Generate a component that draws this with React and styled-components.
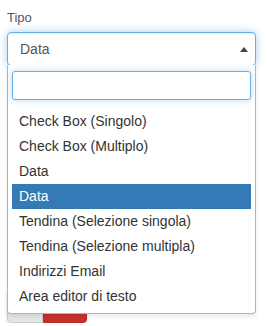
import React from "react";
import styled, { createGlobalStyle } from "styled-components";

const GlobalStyle = createGlobalStyle`
  body {
    margin: 0;
    background: #fff;
    font-family: "Liberation Sans", Arial, sans-serif;
  }
`;

const options = [
  "Check Box (Singolo)",
  "Check Box (Multiplo)",
  "Data",
  "Data",
  "Tendina (Selezione singola)",
  "Tendina (Selezione multipla)",
  "Indirizzi Email",
  "Area editor di testo",
];

const App = () => {
  return (
    <>
      <GlobalStyle />
      <Page>
        <Label>Tipo</Label>
        <Field>
          <Select>
            <Value>Data</Value>
            <Arrow />
          </Select>
          <Dropdown>
            <SearchWrap>
              <Search type="text" />
            </SearchWrap>
            <Results>
              {options.map((o, i) => (
                <Option key={i} $active={i === 3}>
                  {o}
                </Option>
              ))}
            </Results>
          </Dropdown>
        </Field>
        <Buttons>
          <Button aria-label="Annulla" />
          <Button aria-label="Salva" $danger />
        </Buttons>
      </Page>
    </>
  );
};

const Page = styled.div`
  width: 249px;
  padding: 9px 0 0 7px;
`;

const Label = styled.div`
  font-size: 13px;
  line-height: 18px;
  color: #555;
  margin-bottom: 5px;
`;

const Field = styled.div`
  position: relative;
`;

const Select = styled.div`
  box-sizing: border-box;
  height: 34px;
  display: flex;
  align-items: center;
  justify-content: space-between;
  padding: 0 7px 0 12px;
  border: 1px solid #66afe9;
  border-radius: 4px;
  box-shadow: inset 0 1px 1px rgba(0, 0, 0, 0.075),
    0 0 8px rgba(102, 175, 233, 0.6);
  background: #fff;
`;

const Value = styled.span`
  font-size: 14px;
  color: #555;
  line-height: 20px;
`;

const Arrow = styled.span`
  width: 0;
  height: 0;
  border-style: solid;
  border-width: 0 4px 5px 4px;
  border-color: transparent transparent #444 transparent;
`;

const Dropdown = styled.div`
  position: absolute;
  z-index: 2;
  left: 0;
  right: 0;
  top: 33px;
  box-sizing: border-box;
  background: #fff;
  border: 1px solid #b4b4b4;
  border-top: none;
  border-radius: 0 0 4px 4px;
  box-shadow: 0 3px 4px rgba(0, 0, 0, 0.08);
`;

const SearchWrap = styled.div`
  padding: 6px 4px 0 4px;
`;

const Search = styled.input`
  display: block;
  box-sizing: border-box;
  width: 100%;
  height: 29px;
  margin: 0;
  border: 1px solid #66afe9;
  border-radius: 3px;
  outline: none;
  box-shadow: 0 0 6px rgba(102, 175, 233, 0.45);
`;

const Results = styled.ul`
  list-style: none;
  margin: 0;
  padding: 9px 4px 4px 4px;
`;

const Option = styled.li`
  height: 25px;
  line-height: 25px;
  padding: 0 7px;
  font-size: 14px;
  white-space: nowrap;
  color: ${(p) => (p.$active ? "#fff" : "#333")};
  background: ${(p) => (p.$active ? "#337ab7" : "transparent")};
`;

const Buttons = styled.div`
  display: flex;
  margin-top: 223px;
  box-shadow: 0 2px 3px rgba(0, 0, 0, 0.15);
  width: max-content;
  border-radius: 4px;
`;

const Button = styled.button`
  height: 34px;
  width: ${(p) => (p.$danger ? "44px" : "36px")};
  border: 1px solid ${(p) => (p.$danger ? "#b52b27" : "#ccc")};
  background: ${(p) => (p.$danger ? "#c9302c" : "#e6e6e6")};
  padding: 0;
  border-radius: ${(p) => (p.$danger ? "0 4px 4px 0" : "4px 0 0 4px")};
`;

export default App;
